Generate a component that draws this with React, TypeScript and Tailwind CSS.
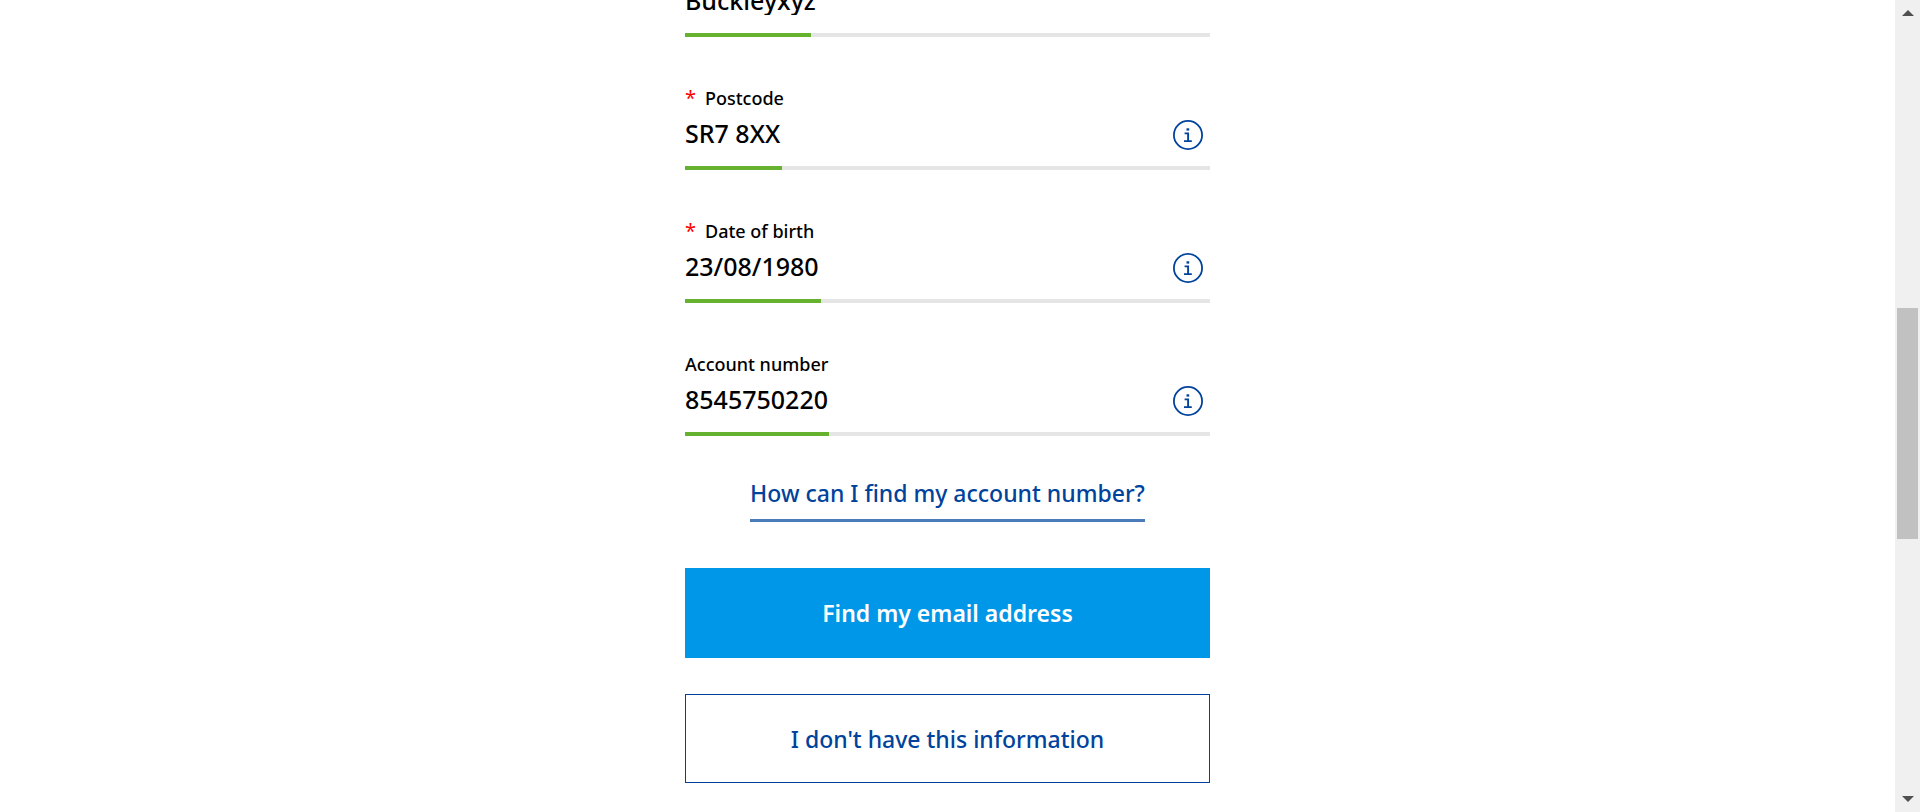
type FieldProps = {
  id: string;
  label: string;
  value: string;
  required?: boolean;
  info?: boolean;
  barClass: string;
};

function InfoIcon() {
  return (
    <svg viewBox="0 0 30 30" className="size-[30px]" fill="none" stroke="#00439c" aria-hidden="true">
      <circle cx="15" cy="15" r="14.1" strokeWidth="1.8" />
      <path d="M11.6 13.4h3.5v7.6M11 21.1h7.8" strokeWidth="1.9" />
      <rect x="13.5" y="8.3" width="2.7" height="2.3" fill="#00439c" stroke="none" />
    </svg>
  );
}

function Field({ id, label, value, required, info, barClass }: FieldProps) {
  return (
    <div className="flex h-[133px] shrink-0 flex-col justify-end">
      <label htmlFor={id} className="flex gap-2.5 text-lg/6 font-medium">
        {required && <span className="w-2.5 text-[20px] font-normal text-[#ff0000]">*</span>}
        {label}
      </label>
      <div className="mt-2 flex h-8 items-start justify-between gap-2 pr-[7px]">
        <input
          id={id}
          type="text"
          defaultValue={value}
          className="h-[30px] min-w-0 grow bg-transparent text-[25px]/[30px] font-medium outline-none"
        />
        {info && (
          <button type="button" aria-label={`About ${label}`} className="shrink-0 self-end">
            <InfoIcon />
          </button>
        )}
      </div>
      <div className="mt-4 h-1 bg-[#e5e5e5]">
        <div className={`h-1 bg-[#66b22e] ${barClass}`} />
      </div>
    </div>
  );
}

function ScrollRail() {
  return (
    <aside className="flex w-[25px] shrink-0 flex-col items-center justify-between bg-[#f0f0f0] py-2.5" aria-hidden="true">
      <svg viewBox="0 0 12 6" className="h-1.5 w-3" fill="#505050">
        <path d="M6 0l6 6H0z" />
      </svg>
      <div className="flex w-full grow flex-col items-center">
        <div className="grow-[292]" />
        <div className="w-[21px] grow-[231] bg-[#c1c1c1]" />
        <div className="grow-[257]" />
      </div>
      <svg viewBox="0 0 12 6" className="h-1.5 w-3" fill="#505050">
        <path d="M0 0h12L6 6z" />
      </svg>
    </aside>
  );
}

export default function App() {
  return (
    <div className="flex h-screen overflow-hidden bg-white font-['Noto_Sans',sans-serif] text-black">
      <main className="grow">
        <form className="mx-auto flex w-full max-w-[525px] flex-col" onSubmit={(e) => e.preventDefault()}>
          <div className="flex h-[37px] flex-col justify-end overflow-hidden">
            <Field id="surname" label="Last name" value="Buckleyxyz" required barClass="w-[126px]" />
          </div>
          <Field id="postcode" label="Postcode" value="SR7 8XX" required info barClass="w-[97px]" />
          <Field id="dob" label="Date of birth" value="23/08/1980" required info barClass="w-[136px]" />
          <Field id="account" label="Account number" value="8545750220" info barClass="w-[144px]" />
          <a
            href="#account-help"
            className="mt-[41px] self-center border-b-[3px] border-[#4c7bb9] pb-2.5 text-[23px]/8 font-medium text-[#00439c]"
          >
            How can I find my account number?
          </a>
          <button type="submit" className="mt-[46px] h-[90px] bg-[#0097e8] text-[23px]/8 font-semibold text-white">
            Find my email address
          </button>
          <button
            type="button"
            className="mt-9 h-[89px] border border-[#00439c] bg-white text-[23px]/8 font-medium text-[#00439c]"
          >
            I don't have this information
          </button>
        </form>
      </main>
      <ScrollRail />
    </div>
  );
}
